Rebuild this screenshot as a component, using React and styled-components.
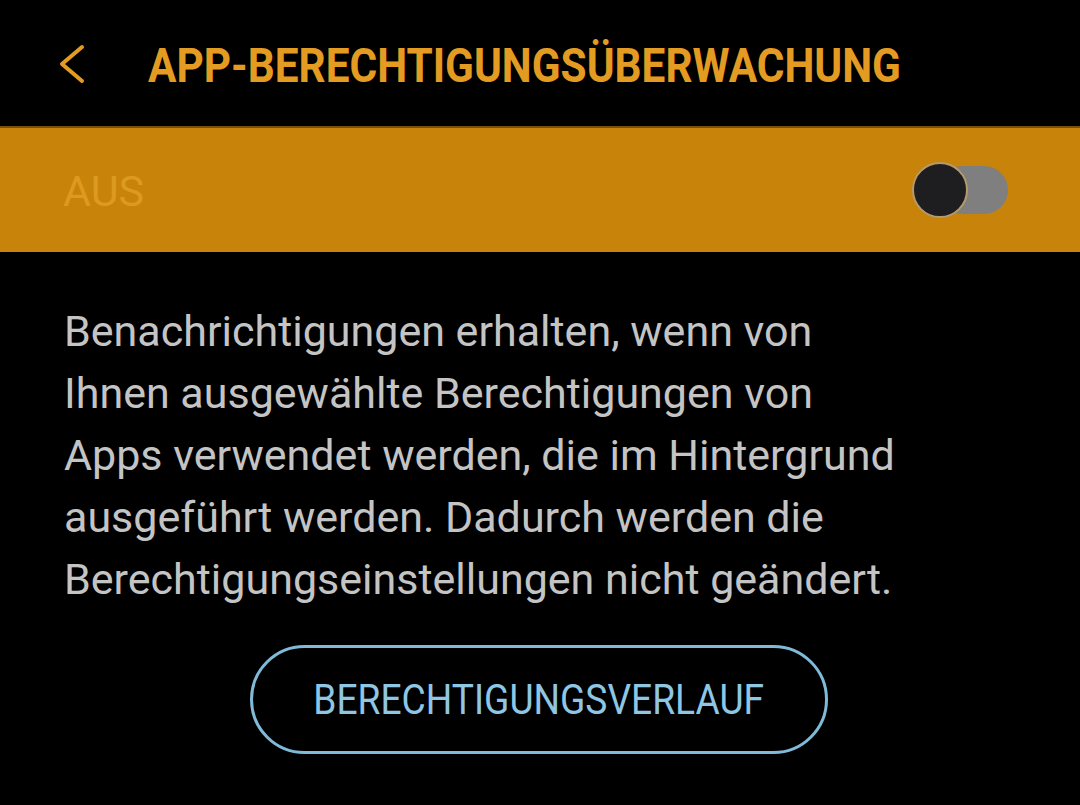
import React from "react";
import styled, { createGlobalStyle } from "styled-components";

const Global = createGlobalStyle`
  html, body {
    margin: 0;
    padding: 0;
    background: #000;
  }
  body {
    font-family: Roboto, "Noto Sans", sans-serif;
  }
`;

const Page = styled.div`
  width: 1080px;
  height: 805px;
  background: #000;
  overflow: hidden;
`;

const Header = styled.header`
  height: 126px;
  display: flex;
  align-items: center;
  padding-left: 56px;
  box-sizing: border-box;
`;

const Back = styled.button`
  width: 30px;
  height: 42px;
  padding: 0;
  margin-top: 2px;
  border: none;
  background: none;
  display: flex;
  align-items: center;
`;

const Title = styled.h1`
  margin: 4px 0 0 62px;
  font-family: Roboto, sans-serif;
  font-weight: 700;
  font-size: 49px;
  color: #e39b22;
  white-space: nowrap;
  transform: scaleX(0.864);
  transform-origin: left center;
`;

const SwitchBar = styled.div`
  height: 126px;
  background: #c8830a;
  border-top: 2px solid #7a5008;
  box-sizing: border-box;
  display: flex;
  align-items: center;
  justify-content: space-between;
  padding: 0 72px 0 63px;
`;

const State = styled.span`
  font-size: 43px;
  color: #dc9a1f;
  margin-top: 2px;
`;

const Toggle = styled.div`
  position: relative;
  width: 96px;
  height: 56px;
  display: flex;
  align-items: center;
`;

const Track = styled.div`
  margin-left: 26px;
  width: 70px;
  height: 48px;
  border-radius: 24px;
  background: #7f7f7f;
`;

const Thumb = styled.div`
  position: absolute;
  left: 0;
  top: 0;
  width: 52px;
  height: 52px;
  border-radius: 50%;
  background: #1e1e20;
  border: 2px solid #b59a6a;
`;

const Body = styled.div`
  padding: 48px 64px 0;
  display: flex;
  flex-direction: column;
  align-items: flex-start;
`;

const Text = styled.p`
  margin: 0;
  font-size: 43px;
  line-height: 62px;
  color: #c4c4c4;
  width: 960px;
  white-space: nowrap;
`;

const HistoryButton = styled.button`
  align-self: center;
  margin-top: 35px;
  margin-left: -2px;
  width: 578px;
  height: 109px;
  border-radius: 55px;
  border: 3px solid #7fbad9;
  background: #000;
  color: #8ec6e3;
  font-family: Roboto, sans-serif;
  font-size: 42px;
  display: flex;
  align-items: center;
  justify-content: center;
  padding: 0;
`;

const ButtonLabel = styled.span`
  display: inline-block;
  transform: scaleX(0.885);
  white-space: nowrap;
`;

export default function App() {
  return (
    <Page>
      <Global />
      <Header>
        <Back aria-label="Zurück">
          <svg width="30" height="42" viewBox="0 0 30 42">
            <path
              d="M26 4 L6 21 L26 38"
              fill="none"
              stroke="#e39b22"
              strokeWidth="4"
              strokeLinecap="round"
              strokeLinejoin="round"
            />
          </svg>
        </Back>
        <Title>APP-BERECHTIGUNGSÜBERWACHUNG</Title>
      </Header>
      <SwitchBar>
        <State>AUS</State>
        <Toggle>
          <Track />
          <Thumb />
        </Toggle>
      </SwitchBar>
      <Body>
        <Text>
          Benachrichtigungen erhalten, wenn von
          <br />
          Ihnen ausgewählte Berechtigungen von
          <br />
          Apps verwendet werden, die im Hintergrund
          <br />
          ausgeführt werden. Dadurch werden die
          <br />
          Berechtigungseinstellungen nicht geändert.
        </Text>
        <HistoryButton>
          <ButtonLabel>BERECHTIGUNGSVERLAUF</ButtonLabel>
        </HistoryButton>
      </Body>
    </Page>
  );
}
